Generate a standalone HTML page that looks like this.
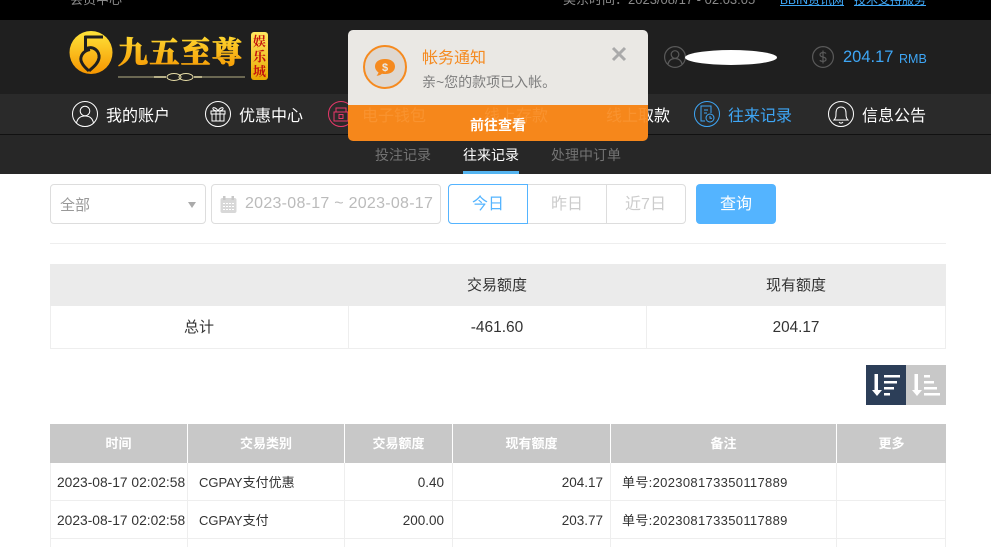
<!DOCTYPE html>
<html lang="zh"><head><meta charset="utf-8"><title>往来记录</title>
<style>
*{box-sizing:border-box}
html,body{margin:0;padding:0;width:991px;height:547px;overflow:hidden;background:#fff;font-family:"Liberation Sans","Noto Sans CJK SC",sans-serif}
.a{position:absolute;white-space:nowrap}
.nav{font-size:16px;color:#fff;top:105px;line-height:24px}
.ic{position:absolute;top:101px}
.c{text-align:center}
.cell{position:absolute;font-size:14px;color:#333;line-height:38px;height:38px;white-space:nowrap}
.th{position:absolute;top:424px;height:39px;background:#c8c8c8;color:#fff;font-size:13px;font-weight:bold;line-height:39px;text-align:center}
.hl{position:absolute;height:1px;background:#eee}
.vl{position:absolute;width:1px;background:#eee}
</style></head><body>
<div class="a" style="left:0;top:0;width:991px;height:20px;background:#000"></div>
<div class="a" style="left:70px;top:-9px;font-size:13px;line-height:18px;color:#8a8a8a">会员中心</div>
<div class="a" style="left:563px;top:-9px;font-size:13px;line-height:18px;color:#8a8a8a">美东时间：2023/08/17 - 02:03:05</div>
<div class="a" style="left:780px;top:-9px;font-size:12px;line-height:18px;color:#3ea6f5;text-decoration:underline">BBIN资讯网</div>
<div class="a" style="left:854px;top:-9px;font-size:12px;line-height:18px;color:#3ea6f5;text-decoration:underline">技术支持服务</div>

<div class="a" style="left:0;top:20px;width:991px;height:74px;background:#1f1f1f"></div>
<div class="a" style="left:0;top:94px;width:991px;height:40px;background:#2a2a2a"></div>
<div class="a" style="left:0;top:134px;width:991px;height:1px;background:#111"></div>
<div class="a" style="left:0;top:135px;width:991px;height:39px;background:#272727"></div>

<svg class="a" style="left:60px;top:25px" width="220" height="65" viewBox="0 0 220 65">
<defs><linearGradient id="g" x1="0" y1="0" x2="0" y2="1"><stop offset="0" stop-color="#ffe43a"/><stop offset="1" stop-color="#f59500"/></linearGradient>
<linearGradient id="b" x1="0" y1="0" x2="0" y2="1"><stop offset="0" stop-color="#ffe860"/><stop offset="1" stop-color="#e8a800"/></linearGradient></defs>
<circle cx="31" cy="27.500" r="21.500" fill="url(#g)"/>
<g fill="none" stroke="#1f1f1f" stroke-width="3"><path d="M43 12H24.500M25.500 11V24C33 20 40 26 39 33C38 39 32 43 29 46"/><path d="M30 24.500C22 26 19 33 22 38C24 42 27 44 29 46"/></g>
<text x="58" y="38" font-family="Noto Serif CJK SC,serif" font-weight="900" font-size="30" fill="url(#g)" stroke="url(#g)" stroke-width=".8" textLength="124">九五至尊</text>
<rect x="191" y="7" width="17" height="48" rx="3" fill="url(#b)"/>
<text x="199.500" y="21" text-anchor="middle" font-family="Noto Serif CJK SC,serif" font-weight="700" font-size="13" fill="#c4120c">娱</text>
<text x="199.500" y="36" text-anchor="middle" font-family="Noto Serif CJK SC,serif" font-weight="700" font-size="13" fill="#c4120c">乐</text>
<text x="199.500" y="51" text-anchor="middle" font-family="Noto Serif CJK SC,serif" font-weight="700" font-size="13" fill="#c4120c">城</text>
<path d="M58 52H104M136 52H185" stroke="#e9dfa8" stroke-width=".8"/>
<path d="M94 52H106M134 52H142" stroke="#e9dfa8" stroke-width="1.600"/>
<ellipse cx="114" cy="52" rx="7" ry="3.500" fill="none" stroke="#e9dfa8"/>
<ellipse cx="126" cy="52" rx="7" ry="3.500" fill="none" stroke="#e9dfa8"/>
</svg>

<!-- header right -->
<svg class="ic" style="left:664px;top:46px" width="22" height="22" viewBox="0 0 22 22" fill="none" stroke="#5a5a5a" stroke-width="1.200"><circle cx="11" cy="11" r="10.400"/><circle cx="11" cy="8.500" r="3.800"/><path d="M4 18c1-4 4-5.500 7-5.500s6 1.500 7 5.500"/></svg>
<div class="a" style="left:685px;top:50px;width:92px;height:15px;background:#fff;border-radius:50%"></div>
<svg class="ic" style="left:812px;top:46px" width="22" height="22" viewBox="0 0 22 22" fill="none" stroke="#5a5a5a" stroke-width="1.200"><circle cx="11" cy="11" r="10.400"/><path d="M14 7.500c-1-1.300-6-1.500-6 1.200 0 3 6 1.600 6 4.600 0 2.700-5 2.500-6.200 1M11 4.500v13"/></svg>
<div class="a" style="left:843px;top:45px;font-size:16.500px;line-height:24px;color:#3ea6f5">204.17</div>
<div class="a" style="left:899px;top:47px;font-size:12.500px;line-height:24px;color:#3ea6f5">RMB</div>

<!-- nav -->
<svg class="ic" style="left:72px" width="26" height="26" viewBox="0 0 26 26" fill="none" stroke="#fff" stroke-width="1"><circle cx="13" cy="13" r="12.500"/><circle cx="13" cy="10" r="4.800"/><path d="M4.500 22c1-5 4.500-7 8.500-7s7.500 2 8.500 7"/></svg>
<div class="a nav" style="left:106px">我的账户</div>
<svg class="ic" style="left:205px" width="26" height="26" viewBox="0 0 26 26" fill="none" stroke="#fff" stroke-width="1"><circle cx="13" cy="13" r="12.500"/><path d="M6 10h14v3H6zM7 13v7h12v-7M11 10v10M15 10v10M13 10c-2-4-6-4-5-2s3 2 5 2c2 0 4 0 5-2s-3-2-5 2"/></svg>
<div class="a nav" style="left:239px">优惠中心</div>
<svg class="ic" style="left:328px" width="26" height="26" viewBox="0 0 26 26" fill="none" stroke="#e8386a" stroke-width="1"><circle cx="13" cy="13" r="12.500"/><path d="M6 11h14v9H6zM8 11V7h10v4M11 13.500h4v4h-4z"/></svg>
<div class="a nav" style="left:362px">电子钱包</div>
<svg class="ic" style="left:450px" width="26" height="26" viewBox="0 0 26 26" fill="none" stroke="#fff" stroke-width="1"><circle cx="13" cy="13" r="12.500"/><circle cx="11" cy="16" r="5"/><path d="M15 10l4-4M13 5l6 5"/></svg>
<div class="a nav" style="left:484px">线上存款</div>
<svg class="ic" style="left:572px" width="26" height="26" viewBox="0 0 26 26" fill="none" stroke="#fff" stroke-width="1"><circle cx="13" cy="13" r="12.500"/><circle cx="15" cy="9" r="4"/><path d="M4 15c4-1 6 3 10 2l6-2M6 20c3 2 8 2 12-1"/></svg>
<div class="a nav" style="left:606px">线上取款</div>
<svg class="ic" style="left:694px" width="26" height="26" viewBox="0 0 26 26" fill="none" stroke="#3ea6f5" stroke-width="1"><circle cx="13" cy="13" r="12.500"/><path d="M11 20H7V5h10v7M10 9h4M10 12h3"/><circle cx="16" cy="17" r="4"/><path d="M16 15v2.200h2"/></svg>
<div class="a nav" style="left:728px;color:#3ea6f5">往来记录</div>
<svg class="ic" style="left:828px" width="26" height="26" viewBox="0 0 26 26" fill="none" stroke="#fff" stroke-width="1"><circle cx="13" cy="13" r="12.500"/><path d="M6 19c2-2 2-4 2-7 0-4 2-6 5-6s5 2 5 6c0 3 0 5 2 7zM11 21c1 1.500 3 1.500 4 0"/></svg>
<div class="a nav" style="left:862px">信息公告</div>

<!-- subnav -->
<div class="a" style="left:375px;top:145px;font-size:14px;line-height:20px;color:#737373">投注记录</div>
<div class="a" style="left:463px;top:145px;font-size:14px;line-height:20px;color:#fff">往来记录</div>
<div class="a" style="left:463px;top:171px;width:56px;height:3px;background:#54b4f0"></div>
<div class="a" style="left:551px;top:145px;font-size:14px;line-height:20px;color:#737373">处理中订单</div>

<!-- popup -->
<div class="a" style="left:348px;top:30px;width:300px;height:75px;background:#eae8e4;border-radius:5px 5px 0 0"></div>
<div class="a" style="left:348px;top:105px;width:300px;height:36px;background:#f6871b;border-radius:0 0 5px 5px"></div>
<div class="a" style="left:362px;top:105px;font-size:16px;color:#f9932f;line-height:24px">电子钱包</div>
<div class="a" style="left:484px;top:105px;font-size:16px;color:#f9932f;line-height:24px">线上存款</div>
<div class="a" style="left:606px;top:105px;width:42px;overflow:hidden;font-size:16px;color:#f9932f;line-height:24px">线上取款</div>
<div class="a c" style="left:348px;top:105px;width:300px;color:#fff;font-size:14px;font-weight:bold;line-height:40px">前往查看</div>
<svg class="a" style="left:363px;top:45px" width="44" height="44" viewBox="0 0 44 44"><circle cx="22" cy="22" r="21" fill="#dfd8d0" stroke="#f58a1f" stroke-width="2"/><path d="M22 14c6 0 10 3 10 7.500S28 29 22 29c-1 0-2 0-3-.300-1.500 1.300-3.500 2-5.500 2 1-.9 1.700-2 2-3.300-2-1.400-3.500-3.500-3.500-5.900C12 17 16 14 22 14z" fill="#f58a1f"/><text x="22" y="26" text-anchor="middle" font-family="Liberation Sans" font-weight="bold" font-size="11" fill="#eae8e4">$</text></svg>
<div class="a" style="left:422px;top:48px;font-size:16px;line-height:22px;color:#f58a1f">帐务通知</div>
<div class="a" style="left:422px;top:73px;font-size:14px;line-height:18px;color:#7d7d7d">亲~您的款项已入帐。</div>
<svg class="a" style="left:611px;top:46px" width="16" height="16" viewBox="0 0 16 16"><path d="M2 2l12 12M14 2L2 14" stroke="#aaa" stroke-width="3"/></svg>

<!-- filters -->
<div class="a" style="left:50px;top:184px;width:156px;height:40px;border:1px solid #ddd;border-radius:4px"></div>
<div class="a" style="left:60px;top:196px;font-size:15px;line-height:20px;color:#999">全部</div>
<div class="a" style="left:188px;top:202px;width:0;height:0;border-left:4px solid transparent;border-right:4px solid transparent;border-top:6px solid #aaa"></div>
<div class="a" style="left:211px;top:184px;width:230px;height:40px;border:1px solid #ddd;border-radius:4px"></div>
<svg class="a" style="left:220px;top:196px" width="17" height="17" viewBox="0 0 17 17"><rect x="0.500" y="2" width="16" height="15" rx="2" fill="#d8d8d8"/><rect x="3" y="0" width="2.500" height="4" fill="#c8c8c8"/><rect x="11.500" y="0" width="2.500" height="4" fill="#c8c8c8"/><path d="M3 7.500h11M3 10.500h11M3 13.500h11" stroke="#fff" stroke-dasharray="2 1"/></svg>
<div class="a" style="left:245px;top:194px;font-size:16px;letter-spacing:.27px;line-height:20px;color:#bbb">2023-08-17 ~ 2023-08-17</div>
<div class="a" style="left:448px;top:184px;width:238px;height:40px;border:1px solid #ddd;border-radius:4px"></div>
<div class="a c" style="left:448px;top:184px;width:80px;height:40px;border:1px solid #54b4ff;border-radius:4px 0 0 4px;font-size:16px;line-height:39px;color:#54b4ff">今日</div>
<div class="a c" style="left:528px;top:184px;width:78px;font-size:16px;line-height:41px;color:#ccc">昨日</div>
<div class="a" style="left:606px;top:185px;width:1px;height:38px;background:#ddd"></div>
<div class="a c" style="left:606px;top:184px;width:79px;font-size:16px;line-height:41px;color:#ccc">近7日</div>
<div class="a c" style="left:696px;top:184px;width:80px;height:40px;background:#54b4ff;border-radius:4px;font-size:16px;line-height:41px;color:#fff">查询</div>
<div class="hl" style="left:50px;top:243px;width:896px"></div>

<!-- summary -->
<div class="a" style="left:50px;top:264px;width:896px;height:42px;background:#ebebeb"></div>
<div class="a c" style="left:348px;top:264px;width:298px;font-size:15px;line-height:44px;color:#333">交易额度</div>
<div class="a c" style="left:646px;top:264px;width:300px;font-size:15px;line-height:44px;color:#333">现有额度</div>
<div class="a" style="left:50px;top:306px;width:896px;height:43px;border:1px solid #eee;border-top:0"></div>
<div class="vl" style="left:348px;top:306px;height:42px"></div>
<div class="vl" style="left:646px;top:306px;height:42px"></div>
<div class="a c" style="left:50px;top:306px;width:298px;font-size:15px;line-height:44px;color:#333">总计</div>
<div class="a c" style="left:348px;top:306px;width:298px;font-size:15.500px;line-height:44px;color:#333">-461.60</div>
<div class="a c" style="left:646px;top:306px;width:300px;font-size:15.300px;line-height:44px;color:#333">204.17</div>

<!-- sort -->
<svg class="a" style="left:866px;top:365px" width="80" height="40" viewBox="0 0 80 40"><rect width="40" height="40" fill="#2c3e58"/><rect x="40" width="40" height="40" fill="#c8c8c8"/>
<g fill="#fff"><rect x="8.500" y="9" width="3.500" height="16"/><path d="M6 25h10l-5 6z"/><rect x="18" y="10" width="16" height="2.500"/><rect x="18" y="16" width="13" height="2.500"/><rect x="18" y="22" width="10" height="2.500"/><rect x="18" y="28" width="6" height="2.500"/>
<rect x="48.500" y="9" width="3.500" height="16"/><path d="M46 25h10l-5 6z"/><rect x="58" y="10" width="6" height="2.500"/><rect x="58" y="16" width="10" height="2.500"/><rect x="58" y="22" width="13" height="2.500"/><rect x="58" y="28" width="16" height="2.500"/></g></svg>

<!-- table -->
<div class="th" style="left:50px;width:137px">时间</div>
<div class="th" style="left:188px;width:156px">交易类别</div>
<div class="th" style="left:345px;width:107px">交易额度</div>
<div class="th" style="left:453px;width:157px">现有额度</div>
<div class="th" style="left:611px;width:225px">备注</div>
<div class="th" style="left:837px;width:109px">更多</div>
<div class="vl" style="left:50px;top:463px;height:84px"></div>
<div class="vl" style="left:187px;top:463px;height:84px"></div>
<div class="vl" style="left:344px;top:463px;height:84px"></div>
<div class="vl" style="left:452px;top:463px;height:84px"></div>
<div class="vl" style="left:610px;top:463px;height:84px"></div>
<div class="vl" style="left:836px;top:463px;height:84px"></div>
<div class="vl" style="left:945px;top:463px;height:84px"></div>
<div class="hl" style="left:50px;top:500px;width:896px"></div>
<div class="hl" style="left:50px;top:538px;width:896px"></div>

<div class="cell" style="left:57px;top:464px;font-size:13.800px">2023-08-17 02:02:58</div>
<div class="cell" style="left:199px;top:464px;font-size:13px">CGPAY支付优惠</div>
<div class="cell" style="right:547px;top:464px;font-size:13.500px">0.40</div>
<div class="cell" style="right:388px;top:464px;font-size:13.500px">204.17</div>
<div class="cell" style="left:622px;top:464px;font-size:13px;letter-spacing:.33px">单号:202308173350117889</div>

<div class="cell" style="left:57px;top:502px;font-size:13.800px">2023-08-17 02:02:58</div>
<div class="cell" style="left:199px;top:502px;font-size:13px">CGPAY支付</div>
<div class="cell" style="right:547px;top:502px;font-size:13.500px">200.00</div>
<div class="cell" style="right:388px;top:502px;font-size:13.500px">203.77</div>
<div class="cell" style="left:622px;top:502px;font-size:13px;letter-spacing:.33px">单号:202308173350117889</div>
</body></html>
